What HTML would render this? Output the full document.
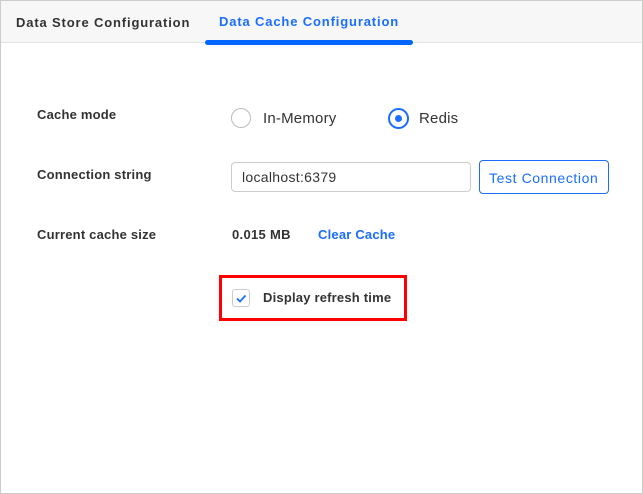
<!DOCTYPE html><html><head><style>
body{margin:0;width:643px;height:494px;position:relative;background:#fff;font-family:"Liberation Sans",sans-serif;overflow:hidden}
.a{position:absolute;white-space:nowrap}
.lbl{font-size:13px;font-weight:bold;color:#333}
</style></head><body>
<div class="a" style="left:0;top:0;width:641px;height:492px;border:1px solid #ccc"></div>
<div class="a" style="left:1px;top:1px;width:641px;height:41px;background:#f7f7f7;border-bottom:1px solid #e3e3e3"></div>
<div class="a lbl" style="left:16px;top:15px;letter-spacing:0.85px;color:#333">Data Store Configuration</div>
<div class="a lbl" style="left:219px;top:14px;letter-spacing:0.85px;color:#1a6dff">Data Cache Configuration</div>
<div class="a" style="left:205px;top:40px;width:208px;height:5px;border-radius:3px;background:#0066ff"></div>
<div class="a lbl" style="left:37px;top:107px;letter-spacing:0.2px">Cache mode</div>
<div class="a lbl" style="left:37px;top:167px;letter-spacing:0.2px">Connection string</div>
<div class="a lbl" style="left:37px;top:227px;letter-spacing:0.2px">Current cache size</div>
<div class="a" style="left:231px;top:108px;width:18px;height:18px;border:1px solid #bbb;border-radius:50%"></div>
<div class="a" style="left:263px;top:110px;font-size:15px;color:#333;letter-spacing:0.2px">In-Memory</div>
<div class="a" style="left:388px;top:108px;width:17px;height:17px;border:2px solid #1a6dff;border-radius:50%"></div>
<div class="a" style="left:395px;top:115px;width:7px;height:7px;background:#1a6dff;border-radius:50%"></div>
<div class="a" style="left:419px;top:110px;font-size:15px;color:#333;letter-spacing:0.2px">Redis</div>
<div class="a" style="left:231px;top:162px;width:238px;height:28px;border:1px solid #ccc;border-radius:4px"></div>
<div class="a" style="left:242px;top:169px;font-size:14px;color:#333;letter-spacing:0.3px">localhost:6379</div>
<div class="a" style="left:479px;top:160px;width:128px;height:32px;border:1px solid #1a6dff;border-radius:4px"></div>
<div class="a" style="left:489px;top:170px;font-size:14px;color:#1a6dff;letter-spacing:0.6px">Test Connection</div>
<div class="a lbl" style="left:232px;top:227px;letter-spacing:0.3px">0.015 MB</div>
<div class="a lbl" style="left:318px;top:227px;color:#1a6dff;letter-spacing:0.2px">Clear Cache</div>
<div class="a" style="left:219px;top:275px;width:182px;height:40px;border:3px solid #f00"></div>
<div class="a" style="left:232px;top:289px;width:16px;height:16px;border:1px solid #ccc;border-radius:3px"></div>
<svg class="a" style="left:232px;top:289px" width="18" height="18"><path d="M5 9.5l3 3 5.5-6" fill="none" stroke="#1a6dff" stroke-width="1.8"/></svg>
<div class="a lbl" style="left:263px;top:290px;letter-spacing:0.2px">Display refresh time</div>
</body></html>
